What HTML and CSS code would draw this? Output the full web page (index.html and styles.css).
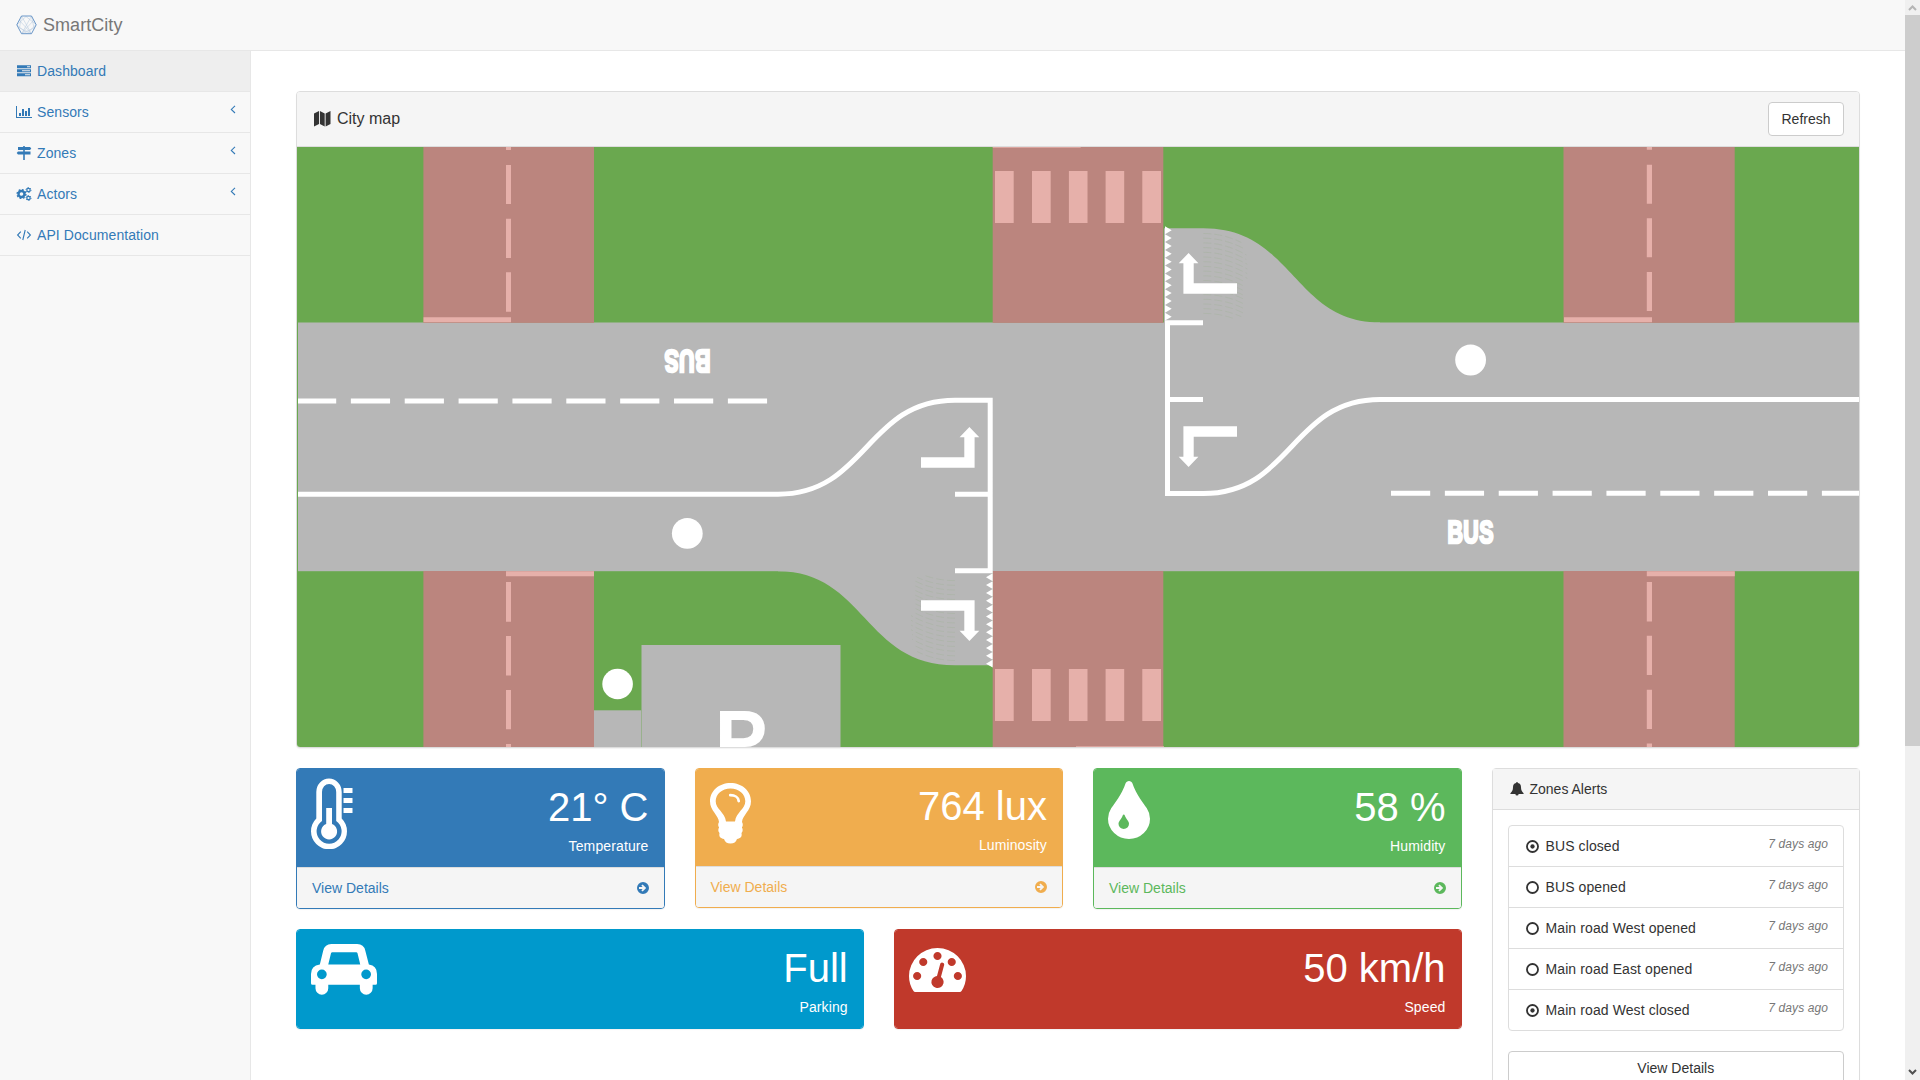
FILE: index.html
```html
<!DOCTYPE html>
<html lang="en">
<head>
<meta charset="utf-8">
<title>SmartCity</title>
<link rel="stylesheet" href="styles.css">
</head>
<body>
<nav class="navbar">
  <svg class="brand-logo" viewBox="0 0 21 20"><path class="logo-mesh" d="M5.5 1 15 18M15.5 1 6 18M1 10 10 1.5 20 9.5 11 18.500ZM5.500 1 3.500 13 15.500 18.500M15.500 1.500 18 13 5.500 18.500M3 5 15.500 18.500M18 5 5.500 18.500"/><path class="logo-frame" d="M5.500 1H15.500L20.200 9.800 15.500 18.700H5.500L.8 9.800Z"/></svg>
  <span class="brand-name">SmartCity</span>
</nav>
<div class="wrapper">
  <aside class="sidebar">
    <a class="menu-item active"><svg class="menu-icon" viewBox="0 0 16 14"><path fill-rule="evenodd" d="M1 1.300h14v3H1zM1 5.300h14v3H1zM1 9.300h14v3H1zM11 2.300v1h3v-1zM6 6.300v1h8v-1zM9 10.300v1h5v-1z"/></svg><span>Dashboard</span></a>
    <a class="menu-item"><svg class="menu-icon" viewBox="0 0 16 14"><path d="M0 1h1v11h15v1H0zM3 8h2v3H3zM6 4h2v7H6zM9 6h2v5H9zM12 3h2v8h-2z"/></svg><span>Sensors</span><svg class="menu-caret" viewBox="0 0 6 9"><path d="M5 .8 1.300 4.400 5 8"/></svg></a>
    <a class="menu-item"><svg class="menu-icon" viewBox="0 0 16 14"><path d="M7.200 0h1.600v1H14l1.300 1.500L14 4H8.800v1.500H14.500v3H8.800V14H7.200V8.500H2L.7 7 2 5.500h5.200V4H2V1h5.200z"/></svg><span>Zones</span><svg class="menu-caret" viewBox="0 0 6 9"><path d="M5 .8 1.300 4.400 5 8"/></svg></a>
    <a class="menu-item"><svg class="menu-icon" viewBox="0 0 16 14"><g class="cogs"><circle cx="5.500" cy="7" r="3" stroke-width="2.400"/><circle cx="5.500" cy="7" r="4.400" stroke-width="1.400" stroke-dasharray="1.750 1.700"/><circle cx="12.500" cy="3" r="1.700" stroke-width="1.200"/><circle cx="12.500" cy="3" r="2.500" stroke-width="1" stroke-dasharray="1.300 1.320"/><circle cx="12.500" cy="11" r="1.700" stroke-width="1.200"/><circle cx="12.500" cy="11" r="2.500" stroke-width="1" stroke-dasharray="1.300 1.320"/></g></svg><span>Actors</span><svg class="menu-caret" viewBox="0 0 6 9"><path d="M5 .8 1.300 4.400 5 8"/></svg></a>
    <a class="menu-item"><svg class="menu-icon" viewBox="0 0 16 14"><path class="line" d="M4.800 3.600 1.600 7l3.200 3.400M11.200 3.600 14.400 7l-3.200 3.400M9.200 2 6.800 12"/></svg><span>API Documentation</span></a>
  </aside>
  <main class="content">
    <section class="panel map-panel">
      <header class="map-heading">
        <svg class="map-icon" viewBox="0 0 17 16"><path d="M0 2.500 5 0v13L0 15.500zM5.900 0l4.800 2.500v13L5.900 13zM11.600 2.500 16.500 0v13l-4.900 2.500z"/></svg>
        <h1>City map</h1>
        <button class="button refresh">Refresh</button>
      </header>
      <svg class="city-map" viewBox="297 147 1562 600">
        <defs>
          <g id="teeth"><path d="M0 0 6.700 3.930 0 7.860V15.720L6.700 11.790 0 7.860V23.580L6.700 19.650 0 15.720V31.440L6.700 27.510 0 23.580V39.300L6.700 35.370 0 31.440V47.160L6.700 43.230 0 39.300V55.020L6.700 51.090 0 47.160V62.880L6.700 58.950 0 55.020V70.740L6.700 66.810 0 62.880V78.600L6.700 74.670 0 70.740V86.460L6.700 82.530 0 78.600V94.320L6.700 90.390 0 86.460Z"/></g>
          <g id="zebra"><path d="M2.300 0h18.700v52H2.300zM39.300 0H58v52H39.300zM76.200 0h18.600v52H76.200zM112.900 0h18.600v52h-18.600zM149.600 0h18.700v52h-18.700z"/></g>
          <g id="turn"><path d="M0 30.700V10.300H-4.700L5.200 0 15 10.300H10.300V30.300H53.600V40.700H0Z"/></g>
          <g id="ripple" class="ripple"><path d="M0 0q20 0 38 9M0 4.700q20 0 40 10M0 9.400q22 0 43 12M0 14.100q22 0 43 12M0 18.800q22 0 44 12M0 23.500q22 0 44 12M0 28.200q22 0 44 12M0 32.900q22 0 44 12M0 37.600q22 0 42 11M0 42.300q22 0 42 11M0 47q22 0 42 11M0 51.700q22 0 42 11M0 56.400q22 0 40 9M0 61.100q22 0 40 9M0 65.800q22 0 40 9M0 70.500q22 0 40 9M0 75.200q20 0 38 8M0 79.900q16 0 30 5"/></g>
        </defs>
        <rect class="grass" x="297" y="147" width="1562" height="600"/>
        <g class="asphalt">
          <rect x="298" y="322.500" width="1562" height="248.700"/>
          <path d="M1164 324V228.300H1203.300C1293.500 228.300 1293.500 322.500 1380 322.500V324Z"/>
          <path d="M992.700 570V665.300H955C864.700 665.300 864.700 571.200 778 571.200V570Z"/>
          <rect x="641.500" y="645" width="199" height="102"/>
          <rect x="594" y="710.300" width="47.200" height="37"/>
        </g>
        <g class="closed-road">
          <rect x="423.400" y="147" width="170.600" height="175.900"/><rect x="423.400" y="571" width="170.600" height="176"/>
          <rect x="992.700" y="147" width="170.600" height="175.900"/><rect x="992.700" y="571" width="170.600" height="176"/>
          <rect x="1563.500" y="147" width="171.200" height="175.900"/><rect x="1563.500" y="571" width="171.200" height="176"/>
        </g>
        <g class="closed-marks">
          <path d="M506 147h5v3h-5zM506 165h5v39h-5zM506 218.700h5V258h-5zM506 272.300h5v39.400h-5zM423.500 317.200H511v5h-87.500z"/>
          <path d="M506 571.300h88v5h-88zM506 582h5v39.700h-5zM506 636h5v39.500h-5zM506 690h5v39.300h-5zM506 744h5v3h-5z"/>
          <path d="M1646.800 147h5.200v2.700h-5.200zM1646.800 164.700h5.200v39h-5.200zM1646.800 218.300h5.200V257.300h-5.200zM1646.800 272h5.200v39h-5.200zM1564 317.200h88v5h-88z"/>
          <path d="M1646.800 571.300h88v5h-88zM1646.800 582h5.200v39.500h-5.200zM1646.800 635.800h5.200v39.200h-5.200zM1646.800 689.700h5.200v39.300h-5.200zM1646.800 743.500h5.200v3.500h-5.200z"/>
          <path d="M992.700 147h88v.8h-88zM1076 746.200h88v.8h-88z"/>
          <use href="#zebra" x="992.700" y="171"/><use href="#zebra" x="992.700" y="669"/>
        </g>
        <use href="#ripple" transform="translate(1203.300 233.500)"/>
        <use href="#ripple" transform="translate(955 660.500) rotate(180)"/>
        <g class="paint-line">
          <path d="M298 494.200H778C866.500 494.200 866.500 400.200 955 400.200H990.200V573.300M955 494.200H990M955 570.800H990"/>
          <path d="M1859 399.500H1380C1291.700 399.500 1291.700 493.500 1203.300 493.500H1167.500V320.300M1167 322.800H1203M1167 399.500H1203"/>
          <path stroke-dasharray="39.200 14.660" stroke-dashoffset="1" d="M298 400.900H768"/><path stroke-dasharray="39.200 14.660" d="M1391 493.200H1859"/>
        </g>
        <g class="paint">
          <use href="#teeth" transform="translate(1165 226.300)"/><use href="#teeth" transform="translate(992.700 667.600) rotate(180)"/>
          <use href="#turn" transform="translate(1183.400 253)"/>
          <use href="#turn" transform="translate(1183.400 467) scale(1 -1)"/>
          <use href="#turn" transform="translate(974.600 427) scale(-1 1)"/>
          <use href="#turn" transform="translate(974.600 641) scale(-1 -1)"/>
          <circle cx="687.300" cy="533.400" r="15.400"/><circle cx="1470.600" cy="360" r="15.400"/><circle cx="617.600" cy="684" r="15.300"/>
          <text class="bus" transform="translate(1447.400 543.300) scale(.67 1)">BUS</text>
          <text class="bus" transform="translate(710.500 350.200) scale(.67 1) rotate(180)">BUS</text>
          <text class="parking-letter" x="714.800" y="765.800">P</text>
        </g>
      </svg>
    </section>
    <div class="columns">
      <div class="widgets">
        <article class="panel widget blue">
          <div class="widget-heading"><svg class="widget-icon thermometer" viewBox="0 0 42 71"><path fill-rule="evenodd" d="M5.300 14a12.700 13.500 0 0 1 25.400 0V40.500A18 18 0 1 1 5.300 40.500ZM11 14V43A12.500 12.500 0 1 0 25.200 43V14A7.100 8 0 0 0 11 14Z"/><path d="M15.200 30h5.800v16a8 8 0 1 1-5.800 0zM32.500 10h9v5h-9zM32.500 20h9v5h-9zM32.500 30h9v5h-9z"/></svg><div class="reading"><strong>21° C</strong><span>Temperature</span></div></div>
          <footer class="widget-footer"><span>View Details</span><svg class="go" viewBox="0 0 12 12"><path fill-rule="evenodd" d="M6 0a6 6 0 1 1 0 12A6 6 0 1 1 6 0zM2 5.100V6.900H5.700L4.300 8.300 5.600 9.600 9.200 6 5.600 2.400 4.300 3.700 5.700 5.100Z"/></svg></footer>
        </article>
        <article class="panel widget amber">
          <div class="widget-heading"><svg class="widget-icon bulb" viewBox="0 0 41 61"><path fill-rule="evenodd" d="M20.500 0C32 0 41 8 41 18.300 41 28 32.500 32 32 39 33.200 41 33 43 31.900 44.500 33 46 33 48.500 31.500 50 32.300 54 30.500 55.300 27 56 26 59 24 60.500 20.500 60.500S15 59 14 56C10.500 55.300 8.700 54 9.500 50 8 48.500 8 46 9.100 44.500 8 43 7.800 41 9 39 8.500 32 0 28 0 18.300 0 8 9 0 20.500 0ZM20.500 5.500C12 5.500 5.700 11 5.700 18.300 5.700 26 15 29.500 16 38.500H25C26 29.500 35.300 26 35.300 18.300 35.300 11 29 5.500 20.500 5.500Z"/><path class="bulb-glow" d="M20.300 12.200C25 12.200 28.500 14.500 28.700 18"/></svg><div class="reading"><strong>764 lux</strong><span>Luminosity</span></div></div>
          <footer class="widget-footer"><span>View Details</span><svg class="go" viewBox="0 0 12 12"><path fill-rule="evenodd" d="M6 0a6 6 0 1 1 0 12A6 6 0 1 1 6 0zM2 5.100V6.900H5.700L4.300 8.300 5.600 9.600 9.200 6 5.600 2.400 4.300 3.700 5.700 5.100Z"/></svg></footer>
        </article>
        <article class="panel widget green">
          <div class="widget-heading"><svg class="widget-icon drop" viewBox="384 64 1024 1472" preserveAspectRatio="none"><path d="M896 1152q0-36-20-69-1-1-15.500-22.500t-25.500-38-25-44-21-50.500q-4-16-21-16t-21 16q-7 23-21 50.500t-25 44-25.500 38-15.500 22.500q-20 33-20 69 0 53 37.500 90.500t90.500 37.500 90.500-37.500 37.500-90.500zm512-128q0 212-150 362t-362 150-362-150-150-362q0-145 81-275 6-9 62.500-90.500t101-151 99.500-178 83-201.500q9-30 34-47t51-17 51.500 17 33.500 47q28 93 83 201.500t99.500 178 101 151 62.500 90.500q81 127 81 275z"/></svg><div class="reading"><strong>58 %</strong><span>Humidity</span></div></div>
          <footer class="widget-footer"><span>View Details</span><svg class="go" viewBox="0 0 12 12"><path fill-rule="evenodd" d="M6 0a6 6 0 1 1 0 12A6 6 0 1 1 6 0zM2 5.100V6.900H5.700L4.300 8.300 5.600 9.600 9.200 6 5.600 2.400 4.300 3.700 5.700 5.100Z"/></svg></footer>
        </article>
        <article class="panel widget wide cyan">
          <div class="widget-heading"><svg class="widget-icon car" viewBox="0 0 65 50"><path fill-rule="evenodd" d="M8.700 20 12 6.500Q13.700 0 20 0H45.500Q52 0 53.500 6.500L57 20Q65 21 65 29.500V38.500Q65 40 63.500 40H60.700V43.500A6.300 6.300 0 0 1 48.100 43.500V40H17V43.500A6.300 6.300 0 0 1 4.400 43.500V40H1.500Q0 40 0 38.500V29.500Q0 21 8.700 20ZM17 20H48.500L45.800 9Q45.500 8 44.500 8H21Q20 8 19.700 9ZM10.700 25A4.800 4.800 0 1 0 10.700 34.600 4.800 4.800 0 1 0 10.700 25ZM54.300 25A4.800 4.800 0 1 0 54.300 34.600 4.800 4.800 0 1 0 54.300 25Z"/></svg><div class="reading"><strong>Full</strong><span>Parking</span></div></div>
        </article>
        <article class="panel widget wide red">
          <div class="widget-heading"><svg class="widget-icon gauge" viewBox="0 256 1792 1408" preserveAspectRatio="none"><path d="M384 1152q0-53-37.500-90.500t-90.500-37.500-90.500 37.500-37.500 90.500 37.500 90.500 90.500 37.500 90.500-37.500 37.500-90.500zm192-448q0-53-37.500-90.500t-90.500-37.500-90.500 37.500-37.500 90.500 37.500 90.500 90.500 37.500 90.500-37.500 37.500-90.500zm428 481l101-382q6-26-7.500-48.500t-38.500-29.500-48 6.500-30 39.500l-101 382q-60 5-107 43.500t-63 98.500q-20 77 20 146t117 89 146-20 89-117q16-60-6-117t-72-91zm660-33q0-53-37.500-90.500t-90.500-37.500-90.500 37.500-37.500 90.500 37.500 90.500 90.500 37.500 90.500-37.500 37.500-90.500zm-640-640q0-53-37.500-90.500t-90.500-37.500-90.500 37.500-37.500 90.500 37.500 90.500 90.500 37.500 90.500-37.500 37.500-90.500zm448 192q0-53-37.500-90.500t-90.500-37.500-90.500 37.500-37.500 90.500 37.500 90.500 90.500 37.500 90.500-37.500 37.500-90.500zm320 448q0 261-141 483-19 29-54 29h-1402q-35 0-54-29-141-221-141-483 0-182 71-348t191-286 286-191 348-71 348 71 286 191 191 286 71 348z"/></svg><div class="reading"><strong>50 km/h</strong><span>Speed</span></div></div>
        </article>
      </div>
      <section class="panel alerts">
        <header class="alerts-heading"><svg class="bell" viewBox="0 0 14 14"><path d="M6.100 1a.9.900 0 0 1 1.800 0C10.300 1.500 11 3.300 11 5.200 11 8 12 9.800 13.600 11.200V12H8.600A1.600 1.600 0 0 1 5.400 12H.4V11.200C2 9.800 3 8 3 5.200 3 3.300 3.700 1.500 6.100 1Z"/></svg><span>Zones Alerts</span></header>
        <div class="alerts-body">
          <ul class="alert-list">
            <li><svg class="state" viewBox="0 0 12 12"><circle cx="6" cy="6" r="5.100"/><circle class="dot" cx="6" cy="6" r="2"/></svg><span>BUS closed</span><em>7 days ago</em></li>
            <li><svg class="state" viewBox="0 0 12 12"><circle cx="6" cy="6" r="5.100"/></svg><span>BUS opened</span><em>7 days ago</em></li>
            <li><svg class="state" viewBox="0 0 12 12"><circle cx="6" cy="6" r="5.100"/></svg><span>Main road West opened</span><em>7 days ago</em></li>
            <li><svg class="state" viewBox="0 0 12 12"><circle cx="6" cy="6" r="5.100"/></svg><span>Main road East opened</span><em>7 days ago</em></li>
            <li><svg class="state" viewBox="0 0 12 12"><circle cx="6" cy="6" r="5.100"/><circle class="dot" cx="6" cy="6" r="2"/></svg><span>Main road West closed</span><em>7 days ago</em></li>
          </ul>
          <button class="button details">View Details</button>
        </div>
      </section>
    </div>
  </main>
</div>
<div class="scrollbar"><svg class="disabled" viewBox="0 0 9 6"><path d="M1 5 4.500 1.500 8 5"/></svg><div class="thumb"></div><svg viewBox="0 0 9 6"><path d="M1 1 4.500 4.500 8 1"/></svg></div>
</body>
</html>
```
FILE: styles.css
```css
* { box-sizing: border-box; }
body {
  margin: 0;
  height: 1080px;
  overflow: hidden;
  padding-right: 15px;
  background: #f8f8f8;
  color: #333;
  font: 14px/20px "Liberation Sans", Arial, sans-serif;
}
svg { display: block; flex: none; }
.navbar {
  display: flex;
  align-items: center;
  height: 51px;
  padding: 0 16px;
  border-bottom: 1px solid #e7e7e7;
}
.brand-logo { width: 21px; height: 20px; margin-right: 6px; fill: none; }
.logo-mesh { stroke: #b3c6dc; stroke-width: .5; }
.logo-frame { stroke: #6a97c8; stroke-width: 1; }
.brand-name { color: #777; font-size: 18px; letter-spacing: .05px; }
.wrapper { display: flex; height: 1029px; }
.sidebar { flex: none; width: 250px; }
.menu-item {
  display: flex;
  align-items: center;
  height: 41px;
  padding: 0 14px 1px 16px;
  border-bottom: 1px solid #e7e7e7;
  color: #337ab7;
  letter-spacing: .08px;
}
.menu-item.active { background: #eee; }
.menu-icon { width: 16px; height: 14px; margin-right: 5px; fill: currentColor; }
.menu-icon .line { fill: none; stroke: currentColor; stroke-width: 1.1; }
.cogs { fill: none; stroke: currentColor; }
.menu-caret {
  width: 6px;
  height: 9px;
  margin: 0 0 4px auto;
  fill: none;
  stroke: currentColor;
  stroke-width: 1.1;
}
.content {
  flex: 1;
  min-width: 0;
  height: 1029px;
  overflow: hidden;
  padding: 40px 45px 0;
  border-left: 1px solid #e7e7e7;
  background: #fff;
}
.panel {
  border: 1px solid #ddd;
  border-radius: 4px;
  background: #fff;
  box-shadow: 0 1px 1px rgba(0, 0, 0, .05);
}
.map-panel { height: 657px; overflow: hidden; }
.map-heading {
  display: flex;
  align-items: center;
  height: 55px;
  padding: 0 15px 0 17px;
  border-bottom: 1px solid #ddd;
  background: #f5f5f5;
}
.map-icon { width: 17px; height: 16px; margin-right: 6px; fill: #333; }
.map-heading h1 { flex: 1; margin: 0; font-size: 16px; font-weight: 400; line-height: 18px; }
.button {
  border: 1px solid #ccc;
  border-radius: 4px;
  background: #fff;
  color: #333;
  font: inherit;
}
.refresh { width: 76px; height: 34px; padding: 0; }
.city-map { width: 100%; height: 600px; }
.grass { fill: #6aa84f; }
.asphalt { fill: #b7b7b7; }
.closed-road { fill: #bb857e; }
.closed-marks { fill: #e6b0aa; }
.ripple { fill: none; stroke: #6aa84f; stroke-width: .5; stroke-dasharray: 8 3; opacity: .22; }
.paint-line { fill: none; stroke: #fff; stroke-width: 5; }
.paint { fill: #fff; }
.bus { font: 700 32px "Liberation Sans", sans-serif; letter-spacing: .6px; stroke: #fff; stroke-width: 2.6px; }
.parking-letter { font: 700 79px "Liberation Sans", sans-serif; }
.columns { display: flex; gap: 30px; margin-top: 20px; }
.widgets {
  flex: none;
  width: 1165.5px;
  display: grid;
  grid-template-columns: repeat(6, 1fr);
  gap: 20px 30px;
  align-items: start;
  align-content: start;
}
.widget { grid-column: span 2; border-color: var(--tone); overflow: hidden; }
.widget.wide { grid-column: span 3; }
.blue { --tone: #337ab7; }
.amber { --tone: #f0ad4e; }
.green { --tone: #5cb85c; }
.cyan { --tone: #0099cc; }
.red { --tone: #c0392b; }
.widget-heading {
  display: flex;
  justify-content: space-between;
  align-items: flex-start;
  height: 98px;
  padding: 10px 15px 10px 14px;
  background: var(--tone);
  color: #fff;
}
.amber .widget-heading { height: 97px; padding-top: 9px; }
.widget-icon { fill: #fff; }
.thermometer { width: 42px; height: 71px; margin-top: -1px; }
.bulb { width: 41px; height: 61px; margin-top: 5px; }
.bulb-glow { fill: none; stroke: #fff; stroke-width: 2.8; stroke-linecap: round; }
.drop { width: 42px; height: 58px; margin-top: 2px; }
.car { width: 66px; height: 51px; margin-top: 4px; }
.gauge { width: 57px; height: 44px; margin-top: 8px; }
.reading { display: flex; flex-direction: column; text-align: right; }
.reading strong { font-size: 40px; font-weight: 400; line-height: 57px; }
.reading span { line-height: 20px; letter-spacing: .12px; }
.widget-footer {
  display: flex;
  justify-content: space-between;
  align-items: center;
  height: 41px;
  padding: 0 15px;
  border-top: 1px solid #ddd;
  background: #f5f5f5;
  color: var(--tone);
}
.go { width: 12px; height: 12px; fill: currentColor; }
.alerts { flex: 1; height: 380px; }
.alerts-heading {
  display: flex;
  align-items: center;
  height: 41px;
  padding: 0 17px;
  border-bottom: 1px solid #ddd;
  background: #f5f5f5;
}
.bell { width: 14px; height: 14px; margin-right: 6px; fill: #333; }
.alerts-body { padding: 15px; }
.alert-list {
  margin: 0 0 20px;
  padding: 0;
  border: 1px solid #ddd;
  border-radius: 4px;
  list-style: none;
}
.alert-list li {
  display: flex;
  align-items: center;
  height: 41px;
  padding: 0 15px 0 17px;
  letter-spacing: .1px;
}
.alert-list li:first-child { height: 40px; }
.alert-list li + li { border-top: 1px solid #ddd; }
.state { width: 13px; height: 13px; margin-right: 7px; fill: none; stroke: #333; stroke-width: 1.7; }
.state .dot { fill: #333; stroke: none; }
.alert-list em { margin: -5px 0 0 auto; color: #777; font-size: 12px; }
.details { width: 100%; height: 34px; }
.scrollbar {
  position: absolute;
  top: 0;
  right: 0;
  width: 15px;
  height: 1080px;
  display: flex;
  flex-direction: column;
  justify-content: space-between;
  align-items: center;
  padding: 5px 0;
  background: #f0f0f0;
}
.scrollbar svg { width: 9px; height: 6px; fill: none; stroke: #505050; stroke-width: 2; }
.scrollbar .disabled { stroke: #b5b5b5; }
.thumb { width: 15px; height: 731px; margin: 4px 0 auto; background: #cdcdcd; }
```
